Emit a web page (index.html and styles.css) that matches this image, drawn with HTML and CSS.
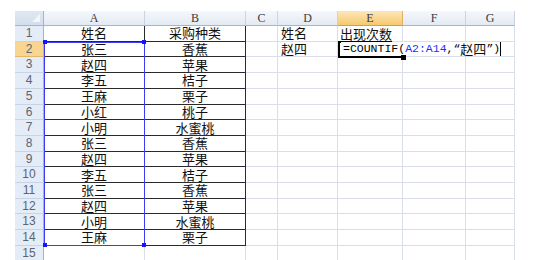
FILE: index.html
```html
<!DOCTYPE html>
<html>
<head>
<meta charset="utf-8">
<link rel="stylesheet" href="styles.css">
</head>
<body>
<div class="stack">
<div class="sheet">
  <div class="corner"><span class="tri"></span></div>
  <div class="ch">A</div><div class="ch">B</div><div class="ch">C</div><div class="ch">D</div><div class="ch sel">E</div><div class="ch">F</div><div class="ch">G</div>

  <div class="rh">1</div><div class="c t ctr">姓名</div><div class="c t ctr">采购种类</div><div class="c"></div><div class="c l">姓名</div><div class="c l ov"><span class="ul">出现次数</span></div><div class="c"></div><div class="c"></div>
  <div class="rh sel">2</div><div class="c t ctr">张三</div><div class="c t ctr">香蕉</div><div class="c"></div><div class="c l">赵四</div><div class="c l ov edit-host"><span class="edit"><span class="m">=COUNTIF(</span><span class="m ref">A2:A14</span><span class="m">,“</span>赵四<span class="m">”)</span></span></div><div class="c"></div><div class="c"></div>
  <div class="rh">3</div><div class="c t ctr">赵四</div><div class="c t ctr">苹果</div><div class="c"></div><div class="c"></div><div class="c"></div><div class="c"></div><div class="c"></div>
  <div class="rh">4</div><div class="c t ctr">李五</div><div class="c t ctr">桔子</div><div class="c"></div><div class="c"></div><div class="c"></div><div class="c"></div><div class="c"></div>
  <div class="rh">5</div><div class="c t ctr">王麻</div><div class="c t ctr">栗子</div><div class="c"></div><div class="c"></div><div class="c"></div><div class="c"></div><div class="c"></div>
  <div class="rh">6</div><div class="c t ctr">小红</div><div class="c t ctr">桃子</div><div class="c"></div><div class="c"></div><div class="c"></div><div class="c"></div><div class="c"></div>
  <div class="rh">7</div><div class="c t ctr">小明</div><div class="c t ctr">水蜜桃</div><div class="c"></div><div class="c"></div><div class="c"></div><div class="c"></div><div class="c"></div>
  <div class="rh">8</div><div class="c t ctr">张三</div><div class="c t ctr">香蕉</div><div class="c"></div><div class="c"></div><div class="c"></div><div class="c"></div><div class="c"></div>
  <div class="rh">9</div><div class="c t ctr">赵四</div><div class="c t ctr">苹果</div><div class="c"></div><div class="c"></div><div class="c"></div><div class="c"></div><div class="c"></div>
  <div class="rh">10</div><div class="c t ctr">李五</div><div class="c t ctr">桔子</div><div class="c"></div><div class="c"></div><div class="c"></div><div class="c"></div><div class="c"></div>
  <div class="rh">11</div><div class="c t ctr">张三</div><div class="c t ctr">香蕉</div><div class="c"></div><div class="c"></div><div class="c"></div><div class="c"></div><div class="c"></div>
  <div class="rh">12</div><div class="c t ctr">赵四</div><div class="c t ctr">苹果</div><div class="c"></div><div class="c"></div><div class="c"></div><div class="c"></div><div class="c"></div>
  <div class="rh">13</div><div class="c t ctr">小明</div><div class="c t ctr">水蜜桃</div><div class="c"></div><div class="c"></div><div class="c"></div><div class="c"></div><div class="c"></div>
  <div class="rh">14</div><div class="c t ctr">王麻</div><div class="c t ctr">栗子</div><div class="c"></div><div class="c"></div><div class="c"></div><div class="c"></div><div class="c"></div>
  <div class="rh">15</div><div class="c"></div><div class="c"></div><div class="c"></div><div class="c"></div><div class="c"></div><div class="c"></div><div class="c"></div>
</div>
<div class="sheet overlay">
  <div class="range"><i class="sq tl"></i><i class="sq tr"></i><i class="sq bl"></i><i class="sq br"></i></div>
  <div class="active"><i class="handle"></i></div>
</div>
</div>
</body>
</html>
```

FILE: styles.css
```css
html, body {
  margin: 0;
  padding: 0;
  background: #fff;
}
body {
  height: 260px;
  overflow: hidden;
  padding: 11px 0 0 15px;
  box-sizing: border-box;
}
.stack {
  display: grid;
  width: 500px;
}
.sheet {
  grid-area: 1 / 1;
  display: grid;
  grid-template-columns: 29px 101px 101px 32px 60px 65px 63px 49px;
  grid-template-rows: 15px repeat(15, 15.714px);
  width: 500px;
}
.overlay {
  pointer-events: none;
  z-index: 5;
}
.corner {
  background: linear-gradient(#dfe8f4, #d3deec);
  border-right: 1px solid #9eb6ce;
  border-bottom: 1px solid #9eb6ce;
  box-sizing: border-box;
  display: flex;
  align-items: flex-end;
  justify-content: flex-end;
  padding: 0 3px 3px 0;
}
.tri {
  width: 0;
  height: 0;
  border-left: 8px solid transparent;
  border-bottom: 8px solid #f3f6fa;
}
.ch {
  background: linear-gradient(#f5f8fc, #e3eaf3);
  border-right: 1px solid #c9d4e2;
  border-bottom: 1px solid #9eb6ce;
  box-sizing: border-box;
  text-align: center;
  font: 12px/14px "Liberation Serif", serif;
  color: #3b3b3b;
}
.ch.sel {
  background: linear-gradient(#fde7b8, #f6c96e);
  border-right-color: #e0b260;
  border-bottom-color: #c9a25a;
}
.rh {
  background: #e4ecf7;
  border-right: 1px solid #9eb6ce;
  border-bottom: 1px solid #c6d4e6;
  box-sizing: border-box;
  text-align: center;
  font: 12px/15px "Liberation Sans", sans-serif;
  color: #5c6470;
}
.rh.sel {
  background: #f8d590;
  border-bottom-color: #e0b868;
}
.c {
  border-right: 1px solid #d9deea;
  border-bottom: 1px solid #d9deea;
  box-sizing: border-box;
  font: 13px/14px "Noto Sans CJK SC", sans-serif;
  color: #111;
  white-space: nowrap;
  overflow: visible;
  display: flex;
  align-items: center;
}
.c.t {
  border-right-color: #2a2a2a;
  border-bottom-color: #2a2a2a;
}
.c.ctr {
  justify-content: center;
}
.c.l {
  padding-left: 3px;
}
.c.ov {
  z-index: 3;
}
.ul {
  border-bottom: 2px solid #000;
  align-self: flex-end;
  margin-bottom: -2px;
  line-height: 14px;
  margin-left: -3px;
  padding-left: 2px;
}
.edit-host {
  padding-left: 0;
}
.edit {
  background: #fff;
  height: 100%;
  display: flex;
  align-items: center;
  padding: 0 0 0 2px;
  border-right: 1px solid #000;
  line-height: 14px;
}
.m {
  font: 11.5px/14px "Liberation Mono", monospace;
  color: #000;
}
.m.ref {
  color: #1a32ff;
}
.range {
  grid-column: 2;
  grid-row: 3 / 16;
  border: 1px solid #3c3cf2;
  position: relative;
}
.sq {
  position: absolute;
  width: 4px;
  height: 4px;
  background: #1414ff;
}
.sq.tl { left: -2px; top: -3px; }
.sq.tr { right: -2px; top: -3px; }
.sq.bl { left: -2px; bottom: -2px; }
.sq.br { right: -2px; bottom: -2px; }
.active {
  grid-column: 6;
  grid-row: 3;
  border-left: 2px solid #000;
  border-bottom: 2px solid #000;
  margin-bottom: -1px;
  position: relative;
}
.handle {
  position: absolute;
  right: -3px;
  bottom: -4px;
  width: 5px;
  height: 5px;
  background: #000;
}
```
